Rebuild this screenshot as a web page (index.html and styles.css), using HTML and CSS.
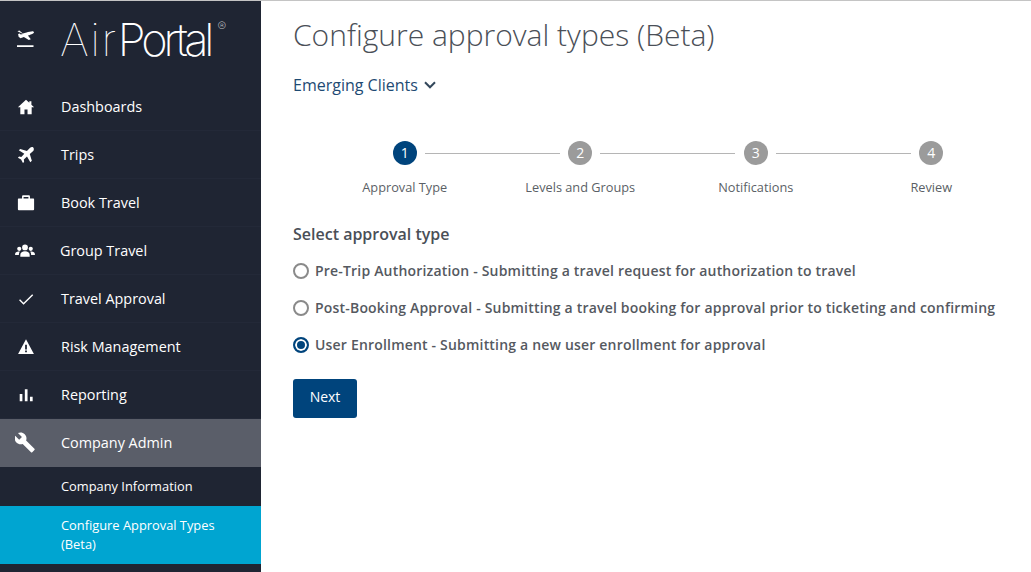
FILE: index.html
```html
<!DOCTYPE html>
<html lang="en">
<head>
	<meta charset="UTF-8">
	<title>Configure approval types (Beta)</title>
	<link rel="stylesheet" href="styles.css">
</head>
<body>
	<div class="app">
		<nav class="sidebar">
			<div class="brand">
				<svg class="brand-icon" viewBox="0 0 20 20" width="20" height="20">
					<path fill="#fff" d="M1 16.200h16.500v1.800H1zM1.400 2.200l1.900-.6 3.600 3 3.700-1c1.800-.5 5.300-1.500 6.600-1.200.9.200 1.100 1.200.2 1.800-1.300.9-4 1.800-5.500 2.400l2.900 3.700-2 .7-4.900-2.900-3.400 1.100-1.900-1.500-.5-2.800 1.600-.5 1 1.200 2.400-.7z"/>
				</svg>
				<span class="logo"><span class="logo-air">Air</span><span class="logo-portal">Portal</span><span class="logo-reg">®</span></span>
			</div>
			<ul class="menu">
				<li><svg viewBox="0 0 20 20"><path d="M10 2 1 10.400h2.700V18h4.600v-5.300h3.400V18h4.600v-7.600H19l-3-2.800V3.500h-2.300v1.900z"/></svg>Dashboards</li>
				<li><svg viewBox="0 0 20 20"><path d="M17.800 1.400c-.9-.7-2.500-.2-3.500.8l-3.300 3.300L3.600 3.200 2 4.800l6.100 3.800-3.300 3.500-2.500-.4L1 13l3.500 2.100L6.600 19l1.300-1.300-.3-2.600 3.500-3.300 3.700 6.200 1.700-1.600-2.300-7.500L18 5.600c1-1 1-3.300-.2-4.200z"/></svg>Trips</li>
				<li><svg viewBox="0 0 20 20"><path d="M7 1.500h6c.8 0 1.400.6 1.400 1.400V5H18c.6 0 1 .5 1 1v11c0 .6-.4 1-1 1H2c-.6 0-1-.4-1-1V6c0-.5.4-1 1-1h3.600V2.900c0-.8.600-1.400 1.400-1.400zM7.300 3.200V5h5.400V3.200z" fill-rule="evenodd"/></svg>Book Travel</li>
				<li class="item-group"><svg viewBox="0 0 22 20"><circle cx="11" cy="6" r="3.200"/><circle cx="4.600" cy="7.600" r="2.300"/><circle cx="17.400" cy="7.600" r="2.300"/><path d="M5.800 16.500v-2.200c0-2.400 2.300-4 5.200-4s5.200 1.600 5.200 4v2.200zM0 14.500v-1.300c0-1.600 1.700-2.700 3.900-2.700.5 0 .9 0 1.300.2-.7.900-1 1.900-1 3.600v.2zM22 14.500v-1.300c0-1.600-1.700-2.700-3.900-2.700-.5 0-.9 0-1.300.2.700.9 1 1.900 1 3.600v.2z"/></svg>Group Travel</li>
				<li><svg viewBox="0 0 20 20"><path d="M7.300 14.300 3.400 10.400 2.300 11.500l5 5L18 5.800l-1.100-1.100z"/></svg>Travel Approval</li>
				<li><svg viewBox="0 0 20 20"><path fill-rule="evenodd" d="M10 1.500 18.800 17.800H1.200zM9 7.500v5.300h2V7.500zM9 14v1.900h2V14z"/></svg>Risk Management</li>
				<li><svg viewBox="0 0 20 20"><path d="M3 9h3v8H3zM8.700 3.500h3V17h-3zM14.400 12h3v5h-3z"/></svg>Reporting</li>
				<li class="active"><svg class="icon-big" viewBox="0 0 24 24"><path d="M22.200 19.200 12.700 9.700c.9-2.400.4-5.200-1.600-7.200C9 .4 5.900 0 3.400 1.200l4.500 4.500-3.100 3.100L.2 4.300C-1 6.800-.5 9.900 1.600 12c2 2 4.800 2.500 7.200 1.600l9.500 9.500c.4.400 1 .4 1.400 0l2.500-2.500c.4-.4.4-1 0-1.400z"/></svg>Company Admin</li>
				<li class="sub first">Company Information</li>
				<li class="sub current">Configure Approval Types (Beta)</li>
			</ul>
		</nav>

		<main class="content">
			<h1>Configure approval types (Beta)</h1>
			<div class="client">Emerging Clients
				<svg viewBox="0 0 12 8" width="12" height="8"><path d="M1 1.300 6 6.300l5-5" fill="none" stroke="#33475b" stroke-width="2"/></svg>
			</div>

			<ol class="steps">
				<li class="step done"><span class="num">1</span><span class="label">Approval Type</span></li>
				<li class="step"><span class="num">2</span><span class="label">Levels and Groups</span></li>
				<li class="step"><span class="num">3</span><span class="label">Notifications</span></li>
				<li class="step"><span class="num">4</span><span class="label">Review</span></li>
			</ol>

			<h2>Select approval type</h2>
			<div class="options">
				<div class="option"><span class="radio"></span>Pre-Trip Authorization - Submitting a travel request for authorization to travel</div>
				<div class="option"><span class="radio"></span>Post-Booking Approval - Submitting a travel booking for approval prior to ticketing and confirming</div>
				<div class="option"><span class="radio checked"></span>User Enrollment - Submitting a new user enrollment for approval</div>
			</div>
			<button class="next">Next</button>
		</main>
	</div>
</body>
</html>
```

FILE: styles.css
```css
html, body{
	height: 100%;
}

body{
	margin: 0;
	padding: 0;
	background-color: #fff;
	font-family: "Open Sans", sans-serif;
	overflow: hidden;
}

.app{
	display: flex;
	height: 100%;
	box-sizing: border-box;
	border-top: 1px solid #c4c4c4;
}

/* sidebar */

.sidebar{
	width: 261px;
	flex: none;
	background-color: #1f2533;
	color: #fff;
}

.brand{
	height: 82px;
	display: flex;
	align-items: center;
	box-sizing: border-box;
	padding: 0 0 4px 16px;
}

.brand-icon{
	margin-top: -2px;
	flex: none;
}

.logo{
	margin-left: 24px;
	display: flex;
	font-family: "Inter", sans-serif;
	font-size: 45px;
	line-height: 48px;
}

.logo-air{
	font-weight: 100;
	letter-spacing: 1.500px;
}

.logo-portal{
	font-weight: 200;
	letter-spacing: -4px;
}

.logo-reg{
	font-size: 13px;
	line-height: 20px;
	margin-left: 7px;
	font-weight: 200;
	opacity: 0.7;
}

.menu{
	list-style: none;
	margin: 0;
	padding: 0;
}

.menu li{
	height: 48px;
	display: flex;
	align-items: center;
	box-sizing: border-box;
	padding-left: 61px;
	position: relative;
	font-size: 14.400px;
	border-bottom: 1px solid #232938;
}

.menu li svg{
	position: absolute;
	left: 17px;
	top: 15px;
	width: 18px;
	height: 18px;
	fill: #fff;
}

.menu li.item-group{
	padding-left: 60px;
}

.menu li.item-group svg{
	left: 15px;
	width: 20px;
}

.menu li svg.icon-big{
	left: 15px;
	top: 13px;
	width: 21px;
	height: 21px;
}

.menu li.active{
	background-color: #5a5e69;
	border-bottom: 0;
	padding-bottom: 2px;
}

.menu li.sub{
	height: 39px;
	font-size: 12.850px;
	border-bottom: 0;
	padding-right: 30px;
}

.menu li.first{
	padding-bottom: 2px;
}

.menu li.current{
	height: 58px;
	background-color: #00a5d1;
	line-height: 19px;
}

/* main */

.content{
	flex: 1;
	padding: 0 32px;
	color: #4a4f57;
}

h1{
	margin: 13px 0 0;
	font-size: 30px;
	line-height: 41px;
	font-weight: 300;
	color: #4a4f57;
}

.client{
	margin-top: 18px;
	font-size: 16px;
	line-height: 24px;
	color: #1e4a73;
	display: flex;
	align-items: center;
}

.client svg{
	margin-left: 6px;
}

.steps{
	list-style: none;
	display: flex;
	margin: 44px 0 0 24px;
	padding: 0;
	width: 702px;
}

.step{
	flex: 1;
	display: flex;
	flex-direction: column;
	align-items: center;
	position: relative;
	font-size: 12.750px;
	color: #5b5f66;
}

/* connector runs from this circle to the next one */
.step::after{
	content: "";
	position: absolute;
	top: 12px;
	left: calc(50% + 20px);
	width: 135px;
	height: 1px;
	background-color: #b5b5b5;
}

.step:last-child::after{
	display: none;
}

.num{
	width: 24px;
	height: 24px;
	border-radius: 50%;
	background-color: #9b9b9b;
	color: #fff;
	font-size: 14px;
	line-height: 24px;
	text-align: center;
}

.step.done .num{
	background-color: #00447c;
}

.label{
	margin-top: 14px;
	line-height: 17px;
}

h2{
	margin: 27px 0 0;
	font-size: 16px;
	line-height: 22px;
	font-weight: 600;
	color: #4a4f57;
}

.options{
	margin-top: 7px;
}

.option{
	height: 37px;
	display: flex;
	align-items: center;
	font-size: 14px;
	font-weight: 600;
	color: #55595f;
	letter-spacing: 0.190px;
}

.radio{
	width: 12px;
	height: 12px;
	border: 2px solid #8a8a8a;
	border-radius: 50%;
	margin-right: 6px;
	background-color: #fff;
	flex: none;
}

.radio.checked{
	border-color: #00447c;
	background-color: #00447c;
	box-shadow: inset 0 0 0 2px #fff;
}

.next{
	display: block;
	margin-top: 16px;
	width: 64px;
	height: 39px;
	padding: 0 0 5px;
	border: 0;
	border-radius: 3px;
	background-color: #00447c;
	color: #fff;
	font-family: inherit;
	font-size: 14px;
}
```
